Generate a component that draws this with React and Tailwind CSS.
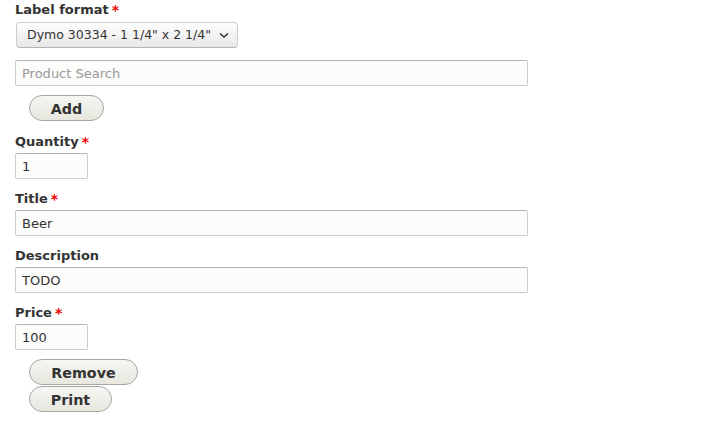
export default function App() {
  const font = { fontFamily: '"DejaVu Sans", sans-serif' };
  const Label = ({ children, req }) => (
    <div className="text-[13px] font-bold text-[#333] leading-[18px] flex items-center">
      {children}
      {req && <span className="text-[#e00] ml-[3px] font-bold text-[14px]">*</span>}
    </div>
  );
  const inputCls =
    "h-[26px] box-border border border-[#ccc] border-t-[#b4b4b4] rounded-[2px] bg-[#fcfcfa] px-[6px] text-[13px] text-[#333] outline-none";
  const btnCls =
    "box-border h-[26px] rounded-[20px] border border-[#a6a6a6] bg-gradient-to-b from-[#f6f6f3] to-[#e7e7df] text-[14.3px] font-bold text-[#333] leading-none pt-[2px]";
  return (
    <div style={font} className="w-[708px] h-[442px] bg-white pl-[15px] pt-[1px]">
      <Label req>Label format</Label>
      <div className="mt-[3px] ml-[1px] w-[222px] h-[26px] box-border border border-[#ccc] border-b-[#b4b4b4] rounded-[4px] bg-gradient-to-b from-[#fefefe] to-[#e8e8e8] flex items-center pl-[10px] pr-[8px] text-[12.5px] text-[#333] whitespace-nowrap">
        <span className="flex-1">Dymo 30334 - 1 1/4" x 2 1/4"</span>
        <svg width="10" height="7" viewBox="0 0 10 7" className="ml-[4px]">
          <path d="M1 1.5 L5 5 L9 1.5" fill="none" stroke="#333" strokeWidth="1.6" />
        </svg>
      </div>
      <input
        className={inputCls + " mt-[12px] w-[513px] h-[25px] block placeholder:text-[#999]"}
        placeholder="Product Search"
      />
      <button className={btnCls + " mt-[9px] ml-[14px] w-[75px] block"}>Add</button>
      <div className="mt-[12px]">
        <Label req>Quantity</Label>
      </div>
      <input className={inputCls + " mt-[2px] w-[73px] block"} defaultValue="1" />
      <div className="mt-[11px]">
        <Label req>Title</Label>
      </div>
      <input className={inputCls + " mt-[2px] w-[513px] block"} defaultValue="Beer" />
      <div className="mt-[11px]">
        <Label>Description</Label>
      </div>
      <input className={inputCls + " mt-[2px] w-[513px] block"} defaultValue="TODO" />
      <div className="mt-[11px]">
        <Label req>Price</Label>
      </div>
      <input className={inputCls + " mt-[2px] w-[73px] block"} defaultValue="100" />
      <button className={btnCls + " mt-[9px] ml-[14px] w-[109px] block"}>Remove</button>
      <button className={btnCls + " mt-[1px] ml-[14px] w-[83px] block"}>Print</button>
    </div>
  );
}
